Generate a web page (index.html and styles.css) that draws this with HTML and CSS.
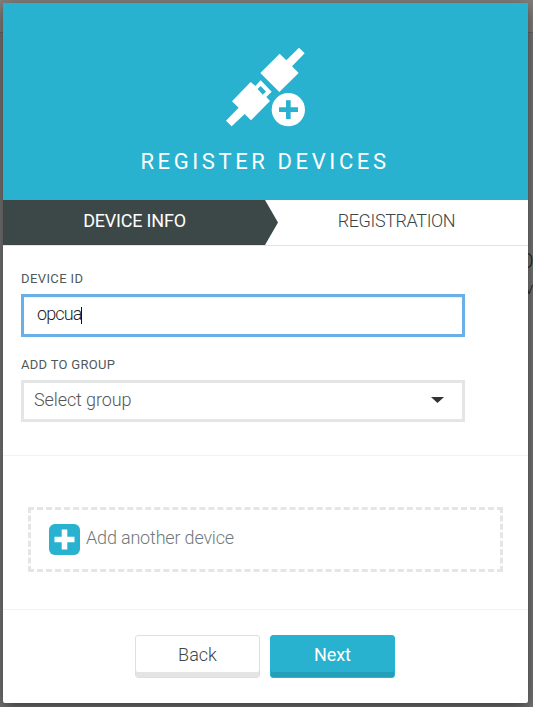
FILE: index.html
```
<!DOCTYPE html>
<html lang="en">
<head>
<meta charset="utf-8">
<title>Register devices</title>
<link rel="stylesheet" href="styles.css">
</head>
<body>
<div class="behind"><div class="behind-bar"></div><span class="behind-title">O</span><span class="behind-text">v</span></div>
<main class="modal">
  <header class="header">
    <svg class="plug" viewBox="0 0 330 300" aria-hidden="true">
      <g fill="#fff">
        <path d="M267 38l17 17-38 39 20 20-58 57-57-57 58-58 20 20z"/>
        <path fill-rule="evenodd" d="M122 141l14 12 16-17 33 34-16 16 11 12-57 58-19-19-39 37-17-17 38-39-20-19zM152 153l-9 9 15 17 10-9z"/>
        <circle cx="235" cy="224" r="50"/>
      </g>
      <path fill="#28b2cf" d="M228 196h14v21h22v14h-22v21h-14v-21h-21v-14h21z"/>
    </svg>
    <h1 class="title">REGISTER DEVICES</h1>
  </header>
  <nav class="steps">
    <div class="step step-active"><span class="t-info">DEVICE INFO</span></div>
    <div class="step"><span class="t-reg">REGISTRATION</span></div>
  </nav>
  <section class="form">
    <label class="label">DEVICE ID</label>
    <div class="field field-focus"><span class="t-value">opcua</span><i class="caret"></i></div>
    <label class="label label-group">ADD TO GROUP</label>
    <div class="field field-select"><span class="t-select">Select group</span>
      <svg class="arrow" viewBox="0 0 13 6"><path fill="#333" d="M0 0h13L6.500 6z"/></svg>
    </div>
  </section>
  <section class="more">
    <div class="add">
      <svg class="dashes" viewBox="0 0 475 65" aria-hidden="true">
        <g fill="none" stroke="#e5e5e5" stroke-width="3">
          <path stroke-dasharray="6 3.020" d="M0 1.500h475M0 63.500h475"/>
          <path stroke-dasharray="6 2.430" d="M1.500 0v65M473.500 0v65"/>
        </g>
      </svg>
      <svg class="plus" viewBox="0 0 31 31"><rect width="31" height="31" rx="6" fill="#28b2cf"/><path stroke="#fff" stroke-width="5.600" d="M15.500 5.500v20M5.500 15.500h20"/></svg>
      <span class="t-add">Add another device</span>
    </div>
  </section>
  <footer class="footer">
    <button class="btn"><span class="t-back">Back</span></button>
    <button class="btn btn-primary"><span class="t-next">Next</span></button>
  </footer>
</main>
</body>
</html>
```
FILE: styles.css
```
* { box-sizing: border-box; }
body {
  margin: 0;
  padding: 3px 5px 4px 3px;
  height: 707px;
  overflow: hidden;
  position: relative;
  background: #767675;
  font-family: Roboto, "Liberation Sans", sans-serif;
  font-size: 18px;
  font-weight: 300;
  color: #3c4748;
}
.behind { position: absolute; inset: 0; overflow: hidden; color: #222; }
.behind-bar { height: 33px; background: #807f7e; border-bottom: 1px solid #686868; }
.behind-title { position: absolute; left: 520px; top: 249px; font-size: 20px; }
.behind-text { position: absolute; left: 525px; top: 278px; font-size: 17px; }
.modal {
  position: relative;
  height: 700px;
  background: #fff;
  border-radius: 0 0 2px 2px;
  box-shadow: 0 5px 15px rgba(0, 0, 0, .5);
}
.header {
  height: 197px;
  padding: 32px 1px 0 0;
  background: #28b2cf;
  display: flex;
  flex-direction: column;
  align-items: center;
}
.plug { width: 110px; height: 100px; flex: none; margin-right: 1px; }
.title {
  margin: 14px 0 0;
  font-size: 22px;
  line-height: 26px;
  font-weight: 400;
  letter-spacing: 3.6px;
  color: #fff;
  white-space: nowrap;
}
.steps { height: 46px; display: flex; border-bottom: 1px solid #e2e4e4; }
.step { flex: 1; display: flex; justify-content: center; line-height: 42px; padding-right: 13px; letter-spacing: -.4px; }
.step-active {
  flex: 0 0 275px;
  padding-right: 12px;
  background: #3c4748;
  color: #fff;
  font-weight: 400;
  letter-spacing: -.2px;
  clip-path: polygon(0 0, 262px 0, 275px 50%, 262px 100%, 0 100%);
}
.form { height: 210px; padding: 24px 63px 0 18px; border-bottom: 1px solid #f1f2f2; }
.label { display: block; height: 24px; font-size: 13px; line-height: 18px; font-weight: 400; letter-spacing: .4px; color: #4f595a; }
.label-group { margin-top: 19px; letter-spacing: .3px; }
.field { display: flex; width: 444px; border: 3px solid #e4e6e6; }
.field-focus { height: 43px; padding-left: 13px; border-color: #6aafe6; line-height: 34px; color: #222; box-shadow: inset 0 1px 1px rgba(0, 0, 0, .075); }
.t-value { letter-spacing: -.9px; }
.caret { width: 1px; height: 17px; margin-top: 10px; background: #111; }
.field-select { height: 42px; padding: 0 18px 0 10px; justify-content: space-between; line-height: 34px; color: #555; }
.t-select { letter-spacing: -.1px; }
.arrow { width: 13px; height: 6px; margin-top: 14px; }
.more { height: 154px; padding: 51px 25px 0; border-bottom: 1px solid #f1f2f2; }
.add { position: relative; height: 65px; padding-left: 21px; display: flex; align-items: center; color: #6f797a; }
.dashes { position: absolute; inset: 0; width: 475px; height: 65px; }
.plus { width: 31px; height: 31px; margin-right: 6px; }
.t-add { margin-top: -4px; letter-spacing: -.18px; }
.footer { display: flex; gap: 10px; padding: 25px 0 0 132px; }
.btn {
  width: 125px;
  height: 43px;
  padding: 0 0 5px;
  border: 1px solid #dedfdf;
  border-radius: 3px;
  background: #fff;
  box-shadow: inset 0 -5px 0 #e4e4e4;
  font: inherit;
  color: #3c4748;
}
.btn-primary { border-color: #28b2cf; background: #28b2cf; box-shadow: inset 0 -5px 0 #249fb9; color: #fff; font-weight: 400; letter-spacing: -.1px; }
```
